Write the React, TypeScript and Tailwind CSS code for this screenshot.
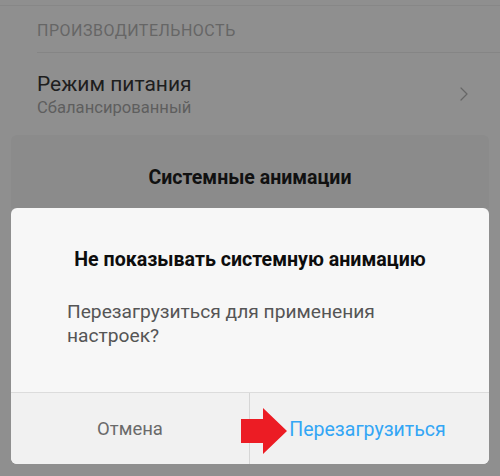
import { ChevronRight } from "lucide-react";

const RedArrow = () => (
  <svg width="47" height="47" viewBox="0 0 47 47" className="absolute left-[-9px] top-[12px]">
    <path d="M0 11 H22 V0 L46 23 L22 46 V35 H0 Z" fill="#ec1c24" />
  </svg>
);

const App = () => {
  return (
    <div
      className="w-[500px] h-[476px] overflow-hidden bg-[#8f8f8f] flex flex-col"
      style={{ fontFamily: "Roboto, 'Noto Sans', sans-serif" }}
    >
      <div className="h-[6px] border-b border-[#878787] shrink-0" />
      <div className="ml-[37px] h-[47px] border-b border-[#858585] flex items-center text-[16px] tracking-[0.5px] text-[#666666] pt-[3px] shrink-0">
        ПРОИЗВОДИТЕЛЬНОСТЬ
      </div>
      <div className="ml-[37px] mr-[24px] h-[82px] flex items-center justify-between shrink-0">
        <div className="flex flex-col pt-[2px]">
          <span className="text-[21px] leading-[26px] text-[#1e1e1e]">Режим питания</span>
          <span className="text-[16.6px] leading-[22px] text-[#5e5e5e]">Сбалансированный</span>
        </div>
        <ChevronRight className="text-[#666666] w-[24px] h-[24px]" strokeWidth={1.2} />
      </div>
      <div className="mx-[11px] h-[73px] rounded-t-[6px] bg-[#8b8b8b] flex justify-center pt-[31px] shrink-0">
        <span className="text-[19.5px] font-bold text-[#111111] leading-[24px]">Системные анимации</span>
      </div>
      <div className="mx-[11px] h-[256px] rounded-[6px] bg-[#f7f7f7] overflow-hidden flex flex-col shrink-0">
        <div className="h-[184px] flex flex-col">
          <div className="pt-[40px] text-center text-[19.6px] font-bold text-[#0d0d0d] leading-[24px]">
            Не показывать системную анимацию
          </div>
          <div className="pl-[56px] pr-[30px] mt-[28px] text-[19.2px] leading-[24px] text-[#555555]">
            Перезагрузиться для применения
            <br />
            настроек?
          </div>
        </div>
        <div className="flex-1 flex border-t border-[#dcdcdc] bg-[#f1f1f1] pt-[3px]">
          <div className="w-[239px] flex items-center justify-center text-[18.5px] text-[#6a6a6a] border-r border-[#d6d6d6] -mt-[3px]">
            <span className="pt-[3px]">Отмена</span>
          </div>
          <div className="relative flex-1 flex items-center justify-center text-[19.5px] text-[#33a6f5] pr-[4px]">
            <RedArrow />
            Перезагрузиться
          </div>
        </div>
      </div>
    </div>
  );
};

export default App;
